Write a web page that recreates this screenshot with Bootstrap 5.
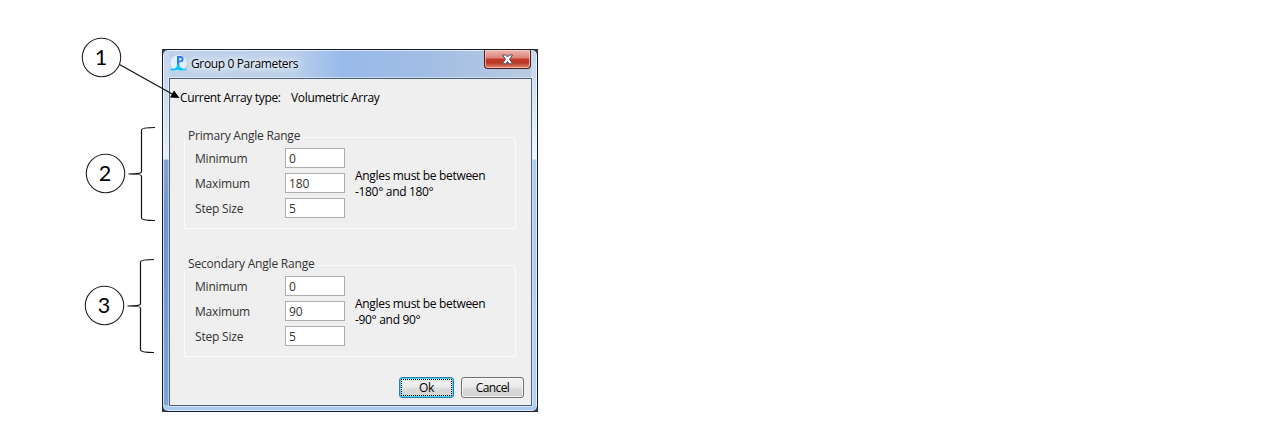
<!DOCTYPE html>
<html lang="en">
<head>
<meta charset="utf-8">
<meta name="viewport" content="width=device-width, initial-scale=1">
<title>Group 0 Parameters</title>
<link rel="stylesheet" href="https://cdn.jsdelivr.net/npm/bootstrap@5.3.0/dist/css/bootstrap.min.css">
<style>
body{background:#fff;overflow:hidden;font:12px/16px "Open Sans","Noto Sans",sans-serif;color:#000}
.stage{width:1280px;height:440px;padding:49px 0 0 162px}
.frame{width:376px;height:363px;background:#2b3242}
.glass{height:100%;border:1px solid #141c2b;border-radius:6px;padding:0 6px 6px;
 background:
 linear-gradient(#a9cbf0,#a9cbf0) 0 100%/100% 6px no-repeat,
 linear-gradient(#c5d6ec 0,#c9d9ed 30px,#e6eef8 109px,#83a5d2 110px,#6f97cc 170px,#7da3d6 100%) 0 0/6px 100% no-repeat,
 linear-gradient(#c5d6ea 0,#c9dcf0 30px,#edf4fb 109px,#a9cdf0 110px,#b4d3f2 100%) 100% 0/6px 100% no-repeat,
 linear-gradient(90deg,#c0d2ea 0,#b9cfea 35%,#98baea 48%,#a1bde4 70%,#b9cbe2 100%);
 box-shadow:inset 0 0 0 1px rgba(255,255,255,.65)}
.titlebar{height:28px;padding-left:1px}
.title{margin-left:4px;letter-spacing:-.36px;line-height:28px;text-shadow:0 0 5px #fff,0 0 9px #fff,0 0 14px #fff}
.btn-x{width:47px;height:19px;padding:0;border:1px solid #4d1a1f;border-top:0;border-radius:0 0 4px 4px;
 background:linear-gradient(#ecb8b0 0,#dc8378 8px,#c03a28 9px,#bd3a26 13px,#e08a70 100%);box-shadow:inset 0 0 0 1px rgba(255,215,205,.65)}
.client{width:363px;height:328px;background:#efefef;border:1px solid #4f5f72;box-shadow:0 0 0 1px rgba(255,255,255,.45);padding:11px 14px 0 10px}
.atype{height:16px;letter-spacing:-.33px}
.atype span:first-child{width:111px}
.gbox{position:relative;width:332px;height:92px;margin-left:4px;border:1px solid #fbfbfb;border-radius:2px;padding:10px 0 0 10px;color:#333;letter-spacing:-.2px}
.gbox .cap{position:absolute;top:-10px;left:0;background:#efefef;padding:0 3px;white-space:nowrap}
.fld{height:25px}
.fld label{width:90px;line-height:22px}
.fld .form-control{width:60px;height:20px;padding:0 3px;border:1px solid #abadb3;border-radius:0;font-size:12px;line-height:18px;color:#333;background:#fff;letter-spacing:-.1px}
.hint{margin:20px 0 0 10px;color:#000;letter-spacing:-.32px;white-space:nowrap}
.wbtn{height:21px;padding:0;font-size:12px;line-height:18px;color:#000;letter-spacing:-.6px;border:1px solid #707070;border-radius:3px;background:linear-gradient(#f2f2f2 0,#ebebeb 9px,#dddddd 10px,#cfcfcf 100%);box-shadow:inset 0 0 0 1px #fafafa}
.wbtn.def{width:55px;letter-spacing:-.4px;border-color:#2c7fa8;box-shadow:inset 0 0 0 1px #48d1f4}
.wbtn.def span{display:block;margin:1px;height:17px;line-height:15px;border:1px dotted #000}
.notes{position:absolute;left:0;top:0;pointer-events:none}
.notes text{font:21.5px Lato,sans-serif;text-anchor:middle;fill:#000}
</style>
</head>
<body>
<main class="stage position-relative">
 <section class="frame">
  <div class="glass">
   <header class="titlebar d-flex align-items-start">
    <svg width="17" height="17" viewBox="0 0 17 17" style="margin-top:5px" aria-hidden="true">
     <circle cx="8.5" cy="8" r="8" fill="#e3eefb"/>
     <path d="M8.500 2h2a2 2 0 0 1 0 4.300H8.500" fill="none" stroke="#2475f5" stroke-width="1.800"/>
     <path d="M7 1h2.200v9.500H7z" fill="#2580f5"/>
     <path d="M.5 13.800h3Q7 13 7.200 9.500h2Q9.500 13 13.500 13.800h3v1.400q-2-.6-4 0t-4 0-4 0-4 0z" fill="#08c3f7"/>
    </svg>
    <span class="title">Group 0 Parameters</span>
    <button class="btn btn-x ms-auto d-flex justify-content-center align-items-center" aria-label="Close">
     <svg width="13" height="11" viewBox="0 0 13 11"><path d="M1.500 1h3.300l1.700 2 1.700-2h3.300L8.500 5.300l3.200 4.500H8.200L6.500 7.600 4.800 9.800H1.300l3.200-4.500z" fill="#fff" stroke="#46505f" stroke-width="1"/></svg>
    </button>
   </header>
   <div class="client">
    <div class="atype d-flex"><span>Current Array type:</span><span>Volumetric Array</span></div>
    <div class="gbox d-flex" style="margin-top:31px">
     <span class="cap">Primary Angle Range</span>
     <div>
      <div class="fld d-flex"><label for="a1">Minimum</label><input id="a1" class="form-control" value="0"></div>
      <div class="fld d-flex"><label for="a2">Maximum</label><input id="a2" class="form-control" value="180"></div>
      <div class="fld d-flex"><label for="a3">Step Size</label><input id="a3" class="form-control" value="5"></div>
     </div>
     <div class="hint">Angles must be between<br>-180° and 180°</div>
    </div>
    <div class="gbox d-flex" style="margin-top:36px">
     <span class="cap">Secondary Angle Range</span>
     <div>
      <div class="fld d-flex"><label for="b1">Minimum</label><input id="b1" class="form-control" value="0"></div>
      <div class="fld d-flex"><label for="b2">Maximum</label><input id="b2" class="form-control" value="90"></div>
      <div class="fld d-flex"><label for="b3">Step Size</label><input id="b3" class="form-control" value="5"></div>
     </div>
     <div class="hint">Angles must be between<br>-90° and 90°</div>
    </div>
    <div class="d-flex justify-content-end" style="margin:20px -7px 0 0;gap:7px">
     <button class="btn wbtn def"><span>Ok</span></button>
     <button class="btn wbtn" style="width:63px">Cancel</button>
    </div>
   </div>
  </div>
 </section>
 <svg class="notes" width="540" height="440" viewBox="0 0 540 440">
  <g fill="#fff" stroke="#222" stroke-width="1.100">
   <circle cx="101.500" cy="57.500" r="19.200"/><circle cx="105.500" cy="173.500" r="19.200"/><circle cx="104.500" cy="305.500" r="19.200"/>
  </g>
  <text x="101" y="65">1</text><text x="105" y="181">2</text><text x="104" y="313">3</text>
  <path d="M119.500 64.500L174 95" stroke="#111" stroke-width="1.200"/>
  <path d="M179.500 98l-9.500-.5 4-7z" fill="#000"/>
  <g fill="none" stroke="#111" stroke-width="1.200">
   <path id="brace" d="M155 127.500Q141.500 127.500 141.500 130V172Q141.500 174 128.500 174Q141.500 174 141.500 176V218Q141.500 220.500 155 220.500"/>
   <use href="#brace" x="-1" y="132"/>
  </g>
 </svg>
</main>
<script src="https://cdn.jsdelivr.net/npm/bootstrap@5.3.0/dist/js/bootstrap.bundle.min.js"></script>
</body>
</html>
